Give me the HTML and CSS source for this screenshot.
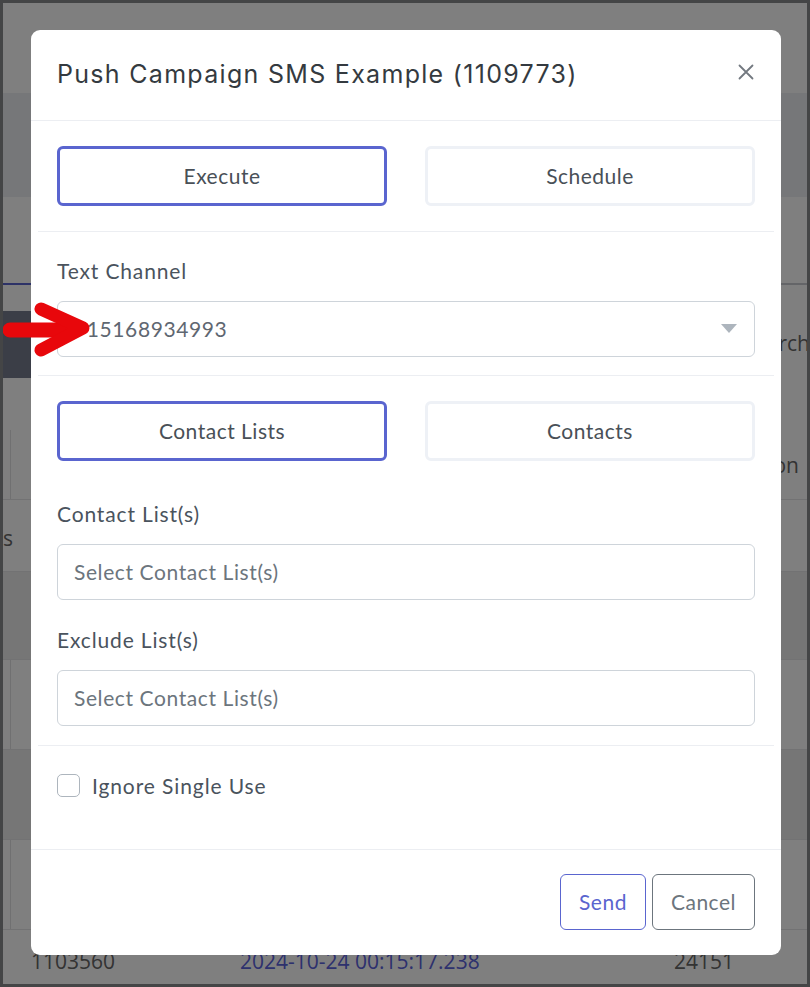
FILE: index.html
```html
<!DOCTYPE html>
<html lang="en">
<head>
<meta charset="utf-8">
<title>Push Campaign</title>
<link rel="stylesheet" href="styles.css">
</head>
<body>
<div class="page">
  <div class="bg-top"></div>
  <div class="bg-band"></div>
  <div class="bg-tabs"><div class="bg-tab active"></div></div>
  <div class="bg-toolbar">
    <div class="bg-darkbtn"></div>
    <div class="bg-search">Search</div>
  </div>
  <div class="bg-table">
    <div class="bg-row head"><div class="c1"></div><div class="grow"></div><div class="bg-th">Action</div></div>
    <div class="bg-row r1"><div class="c1 txt">s</div></div>
    <div class="bg-row r2 alt"></div>
    <div class="bg-row r3"><div class="c1"></div></div>
    <div class="bg-row r3 alt"></div>
    <div class="bg-row r3"><div class="c1"></div></div>
    <div class="bg-row last">
      <span class="bg-id">1103560</span>
      <span class="bg-date">2024-10-24 00:15:17.238</span>
      <span class="bg-num">24151</span>
    </div>
  </div>

  <div class="overlay">
    <div class="modal">
      <div class="modal-header">
        <h1 class="modal-title">Push Campaign SMS Example (1109773)</h1>
        <svg class="close" width="16" height="16" viewBox="0 0 16 16" aria-label="Close">
          <path d="M1.5 1.5 L14.5 14.5 M14.5 1.5 L1.5 14.5" stroke="#737980" stroke-width="1.8" stroke-linecap="round" fill="none"/>
        </svg>
      </div>
      <div class="modal-body">
        <div class="section toggles">
          <button class="toggle active">Execute</button>
          <button class="toggle">Schedule</button>
        </div>
        <div class="section">
          <label class="label">Text Channel</label>
          <div class="select">
            <span class="value">+15168934993</span>
            <span class="caret"></span>
          </div>
        </div>
        <div class="section">
          <div class="toggles-row">
            <button class="toggle active">Contact Lists</button>
            <button class="toggle">Contacts</button>
          </div>
          <div class="group">
            <label class="label">Contact List(s)</label>
            <div class="input">Select Contact List(s)</div>
          </div>
          <div class="group last">
            <label class="label">Exclude List(s)</label>
            <div class="input">Select Contact List(s)</div>
          </div>
        </div>
        <div class="section plain">
          <label class="check"><span class="box"></span><span>Ignore Single Use</span></label>
        </div>
      </div>
      <div class="modal-footer">
        <button class="btn send">Send</button>
        <button class="btn cancel">Cancel</button>
      </div>
    </div>
  </div>

  <svg class="arrow" width="100" height="64" viewBox="0 0 100 64">
    <path d="M10 31 L74 31" stroke="#e8070b" stroke-width="15" stroke-linecap="round" fill="none"/>
    <path d="M41 10 L83 29 L41 51" stroke="#e8070b" stroke-width="13" stroke-linecap="round" stroke-linejoin="round" fill="none"/>
  </svg>
</div>
</body>
</html>
```

FILE: styles.css
```css
* { box-sizing: border-box; }
html, body { margin: 0; padding: 0; }
body { font-family: "Lato", "Open Sans", sans-serif; }

.page {
  position: relative;
  width: 810px;
  height: 987px;
  border: 3px solid #444546;
  background: #ffffff;
  overflow: hidden;
}

/* background page */
.bg-top { height: 90px; background: #fff; }
.bg-band { height: 104px; background: #eceef2; }
.bg-tabs { height: 88px; border-bottom: 2px solid #c8cad0; display: flex; align-items: flex-end; }
.bg-tab.active { width: 200px; height: 2px; margin-bottom: -2px; background: #5a65cf; }
.bg-toolbar { height: 145px; display: flex; justify-content: space-between; align-items: flex-start; padding-top: 26px; }
.bg-darkbtn { width: 200px; height: 67px; background: #767c8e; border-radius: 0 6px 6px 0; }
.bg-search { font-family: "Open Sans", sans-serif; font-size: 21px; color: #666; margin-top: 18px; margin-right: -3px; }
.bg-table { font-family: "Open Sans", sans-serif; color: #666; }
.bg-row { display: flex; border-bottom: 1px solid #e4e4e6; }
.bg-row .c1 { width: 8px; border-right: 1px solid #e0e0e2; }
.bg-row.head { height: 70px; align-items: stretch; }
.bg-row .grow { flex: 1; }
.bg-th { font-size: 21px; align-self: center; margin-right: 8px; }
.bg-row.r1 { height: 72px; }
.bg-row .c1.txt { width: auto; border: 0; font-size: 21px; align-self: center; margin-left: 0; padding-top: 4px; }
.bg-row.r2 { height: 88px; }
.bg-row.r3 { height: 90px; }
.bg-row.alt { background: #ececec; }
.bg-row.last { height: 60px; border: 0; align-items: center; font-size: 21px; padding-top: 1px; }
.bg-id { margin-left: 28px; width: 209px; }
.bg-date { width: 434px; color: #5a62dc; }

/* overlay + modal */
.overlay {
  position: absolute;
  inset: 0;
  background: rgba(0, 0, 0, 0.5);
}
.modal {
  margin: 27px 0 0 28px;
  width: 750px;
  height: 925px;
  background: #fff;
  border-radius: 9px;
  display: flex;
  flex-direction: column;
  color: #495057;
  letter-spacing: 0.6px;
}
.modal-header {
  height: 91px;
  border-bottom: 1px solid #eceef2;
  display: flex;
  align-items: center;
  justify-content: space-between;
  padding: 0 27px 2px 26px;
}
.modal-title {
  margin: 0;
  font-family: "Inter", sans-serif;
  font-weight: 400;
  font-size: 25px;
  letter-spacing: 1.3px;
  color: #343a40;
}
.close { display: block; margin-top: -4px; }
.modal-body { padding: 0 7px; flex: 1; }
.section { padding: 25px 19px 18px; border-bottom: 1px solid #eceef2; }
.section.plain { border-bottom: 0; padding-top: 27px; }
.toggles, .toggles-row { display: flex; gap: 38px; }
.section.toggles { padding-bottom: 25px; }
.toggle {
  flex: 1;
  height: 60px;
  background: #fff;
  border: 3px solid #eef1f6;
  border-radius: 6px;
  font-family: inherit;
  font-size: 21px;
  letter-spacing: 0.5px;
  color: #495057;
  padding-bottom: 2px;
}
.toggle.active { border-color: #5a65cf; }
.label { display: block; font-size: 21px; line-height: 28px; margin-bottom: 16px; color: #4a535d; letter-spacing: 0.85px; }
.select, .input {
  height: 56px;
  border: 1px solid #ced4da;
  border-radius: 6px;
  display: flex;
  align-items: center;
  padding: 0 16px 2px;
  font-size: 21px;
  color: #6c757d;
}
.select .value { flex: 1; color: #5f6771; }
.caret { width: 0; height: 0; border-left: 8px solid transparent; border-right: 8px solid transparent; border-top: 9px solid #adb5bd; margin: 0 1px 0 0; }
.toggles-row { margin-bottom: 39px; }
.group { margin-bottom: 26px; }
.group.last { margin-bottom: 1px; }
.check { display: flex; align-items: center; gap: 12px; font-size: 21px; color: #4a535d; letter-spacing: 0.9px; }
.box { width: 23px; height: 23px; border: 1px solid #adb5bd; border-radius: 5px; }
.modal-footer {
  height: 106px;
  border-top: 1px solid #eceef2;
  display: flex;
  justify-content: flex-end;
  align-items: flex-start;
  gap: 6px;
  padding: 24px 26px 0;
}
.btn {
  height: 56px;
  background: #fff;
  border: 1px solid #6c757d;
  border-radius: 6px;
  font-family: inherit;
  font-size: 21px;
  letter-spacing: 0.5px;
  padding: 0 18px 2px;
  color: #6c757d;
}
.btn.send { border-color: #5a65cf; color: #5a65cf; }

.arrow { position: absolute; left: -3px; top: 296px; }
```
